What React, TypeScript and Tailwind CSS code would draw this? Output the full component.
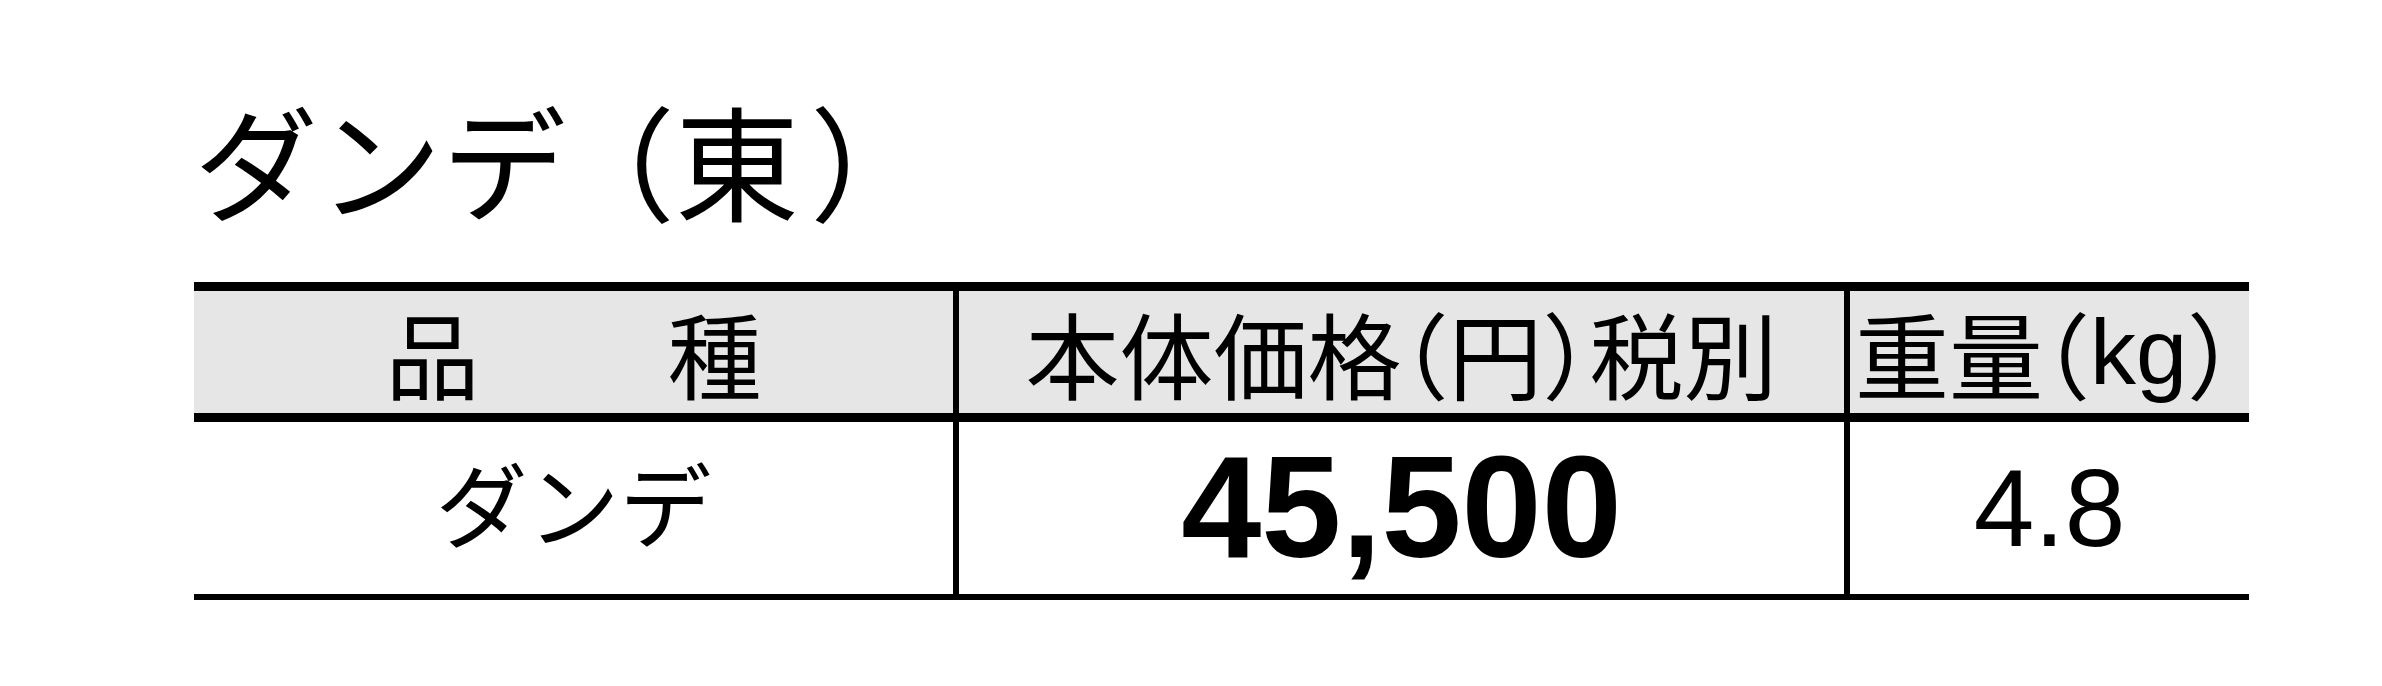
import React from "react";

const jp = "font-['Noto_Sans_CJK_JP',sans-serif]";
const lat = "font-['Liberation_Sans',Arial,sans-serif]";

export default function App() {
  return (
    <div className="w-[2382px] h-[686px] bg-white text-black overflow-hidden">
      <div className="pl-[194px] pt-[96px] h-[282px]">
        <div className={`${jp} text-[124px] leading-none flex items-start whitespace-nowrap [font-feature-settings:'halt']`}>
          <span>ダンデ</span>
          <span className="ml-[47px]">（</span>
          <span>東</span>
          <span className="ml-[11px]">）</span>
        </div>
      </div>
      <div className="ml-[194px] w-[2055px] border-t-[9px] border-b-[6px] border-black">
        <div className={`grid grid-cols-[765px_891px_399px] h-[131px] bg-[#e6e6e6] border-b-[9px] border-black ${jp} text-[94px] leading-none`}>
          <div className="border-r-[6px] border-black flex items-center justify-center whitespace-pre">品　　種</div>
          <div className="border-r-[6px] border-black flex items-center justify-center whitespace-nowrap [font-feature-settings:'halt']">
            本体価格（円）税別
          </div>
          <div className="flex items-center justify-center whitespace-nowrap [font-feature-settings:'halt'] pr-[10px]">
            重量（<span className={`${lat} text-[92px]`}>kg</span>）
          </div>
        </div>
        <div className="grid grid-cols-[765px_891px_399px] h-[172px] leading-none">
          <div className={`border-r-[6px] border-black flex items-center justify-center pb-[14px] ${jp} text-[92px]`}>ダンデ</div>
          <div className={`border-r-[6px] border-black flex items-center justify-center ${lat} font-bold text-[144px]`}>45,500</div>
          <div className={`flex items-center justify-center ${lat} text-[109px]`}>4.8</div>
        </div>
      </div>
    </div>
  );
}
